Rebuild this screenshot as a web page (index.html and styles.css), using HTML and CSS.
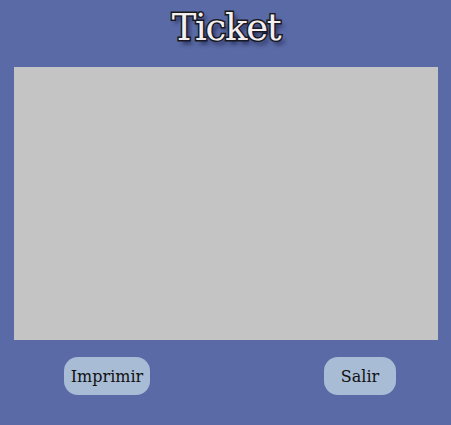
FILE: index.html
```html
<!DOCTYPE html>
<html>
<head>
<meta charset="utf-8">
<link rel="stylesheet" href="styles.css">
</head>
<body>
<div class="page">
  <h1 class="title">Ticket</h1>
  <div class="ticket"></div>
  <div class="actions">
    <button class="btn btn-print">Imprimir</button>
    <button class="btn btn-exit">Salir</button>
  </div>
</div>
</body>
</html>
```
FILE: styles.css
```css
html, body {
  margin: 0;
  padding: 0;
  background: #5a6aa6;
  height: 100%;
}
.page {
  display: flex;
  flex-direction: column;
  padding: 0 13px 0 14px;
}
.title {
  margin: 6px 0 0 0;
  height: 61px;
  text-align: center;
  font-family: "DejaVu Serif", serif;
  font-weight: normal;
  font-size: 37px;
  line-height: 44px;
  letter-spacing: -1.3px;
  color: #f4eef0;
  -webkit-text-stroke: 3px #1a1a1a;
  paint-order: stroke fill;
  text-shadow: 3px 4px 4px rgba(20, 25, 60, 0.8);
}
.ticket {
  height: 273px;
  background: #c4c4c4;
}
.actions {
  display: flex;
  justify-content: space-between;
  padding: 17px 42px 0 50px;
}
.btn {
  height: 38px;
  border: none;
  border-radius: 14px;
  background: #a9bcd5;
  color: #111;
  font-family: "DejaVu Serif", serif;
  font-size: 16px;
  padding: 0 6px;
}
.btn-print { width: 86px; padding: 0 2px; }
.btn-exit { width: 72px; }
```
